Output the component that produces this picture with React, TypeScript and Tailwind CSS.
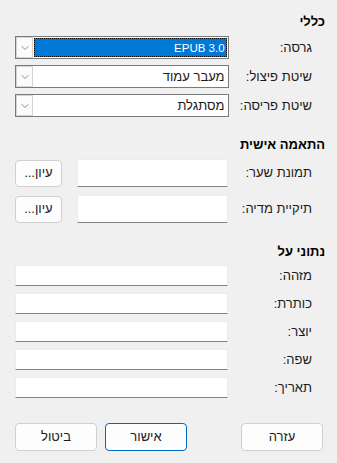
import { ChevronDown } from "lucide-react";

const FONT = { fontFamily: '"Liberation Sans", "DejaVu Sans", Arial, sans-serif' };

function Combo({ value, focused }: { value: string; focused?: boolean }) {
  return (
    <div className="flex h-[23px] w-[215px] border border-[#7a7a7a] bg-white">
      <div className="flex-1 p-px">
        {focused ? (
          <div className="flex h-full items-center bg-[#0078d7] pr-[2px] text-[11.5px] text-white outline-1 outline-dotted outline-black -outline-offset-1">
            {value}
          </div>
        ) : (
          <div className="flex h-full items-center pr-[2px] text-[#1a1a1a]">{value}</div>
        )}
      </div>
      <div className="flex w-[17px] items-center justify-center border border-[#d4d4d4] bg-[#fbfbfb]">
        <ChevronDown size={12} strokeWidth={1.5} className="text-[#6a6a6a]" />
      </div>
    </div>
  );
}

function Field({ h, w }: { h: string; w: string }) {
  return <div className={`${h} ${w} border border-[#ececec] border-b-[#838383] bg-white`} />;
}

function Row({ label, children }: { label: string; children: React.ReactNode }) {
  return (
    <div className="flex items-center">
      <div className="w-[97px] pr-[13px] text-[#1a1a1a]">{label}</div>
      {children}
    </div>
  );
}

export default function App() {
  return (
    <div dir="rtl" style={FONT} className="h-[463px] w-[337px] bg-[#f0f0f0] pr-[12px] pl-[15px] pt-[14px] text-[13px] leading-4">
      <p className="font-bold text-black">כללי</p>
      <div className="mt-[6px] flex flex-col gap-[6px]">
        <Row label="גרסה:">
          <Combo value="EPUB 3.0" focused />
        </Row>
        <Row label="שיטת פיצול:">
          <Combo value="מעבר עמוד" />
        </Row>
        <Row label="שיטת פריסה:">
          <Combo value="מסתגלת" />
        </Row>
      </div>

      <p className="mt-[20px] font-bold text-black">התאמה אישית</p>
      <div className="mt-[6px] flex flex-col gap-[8px]">
        {["תמונת שער:", "תיקיית מדיה:"].map((l) => (
          <Row key={l} label={l}>
            <Field h="h-[28px]" w="w-[152px]" />
            <button className="mr-[15px] h-[27px] w-[47px] rounded-[4px] border border-[#d0d0d0] bg-[#fdfdfd] text-[#1a1a1a]">
              עיון...
            </button>
          </Row>
        ))}
      </div>

      <p className="mt-[21px] font-bold text-black">נתוני על</p>
      <div className="mt-[5px] flex flex-col gap-[7px]">
        {["מזהה:", "כותרת:", "יוצר:", "שפה:", "תאריך:"].map((l) => (
          <Row key={l} label={l}>
            <Field h="h-[21px]" w="w-[214px]" />
          </Row>
        ))}
      </div>

      <div className="mt-[25px] flex items-center justify-between pr-[2px]">
        <button className="h-[28px] w-[82px] rounded-[4px] border border-[#d0d0d0] bg-[#fdfdfd] text-[#1a1a1a]">עזרה</button>
        <div className="flex gap-[8px]">
          <button className="h-[28px] w-[82px] rounded-[4px] border border-[#0067c0] bg-[#fdfdfd] text-[#1a1a1a]">אישור</button>
          <button className="h-[28px] w-[82px] rounded-[4px] border border-[#d0d0d0] bg-[#fdfdfd] text-[#1a1a1a]">ביטול</button>
        </div>
      </div>
    </div>
  );
}
